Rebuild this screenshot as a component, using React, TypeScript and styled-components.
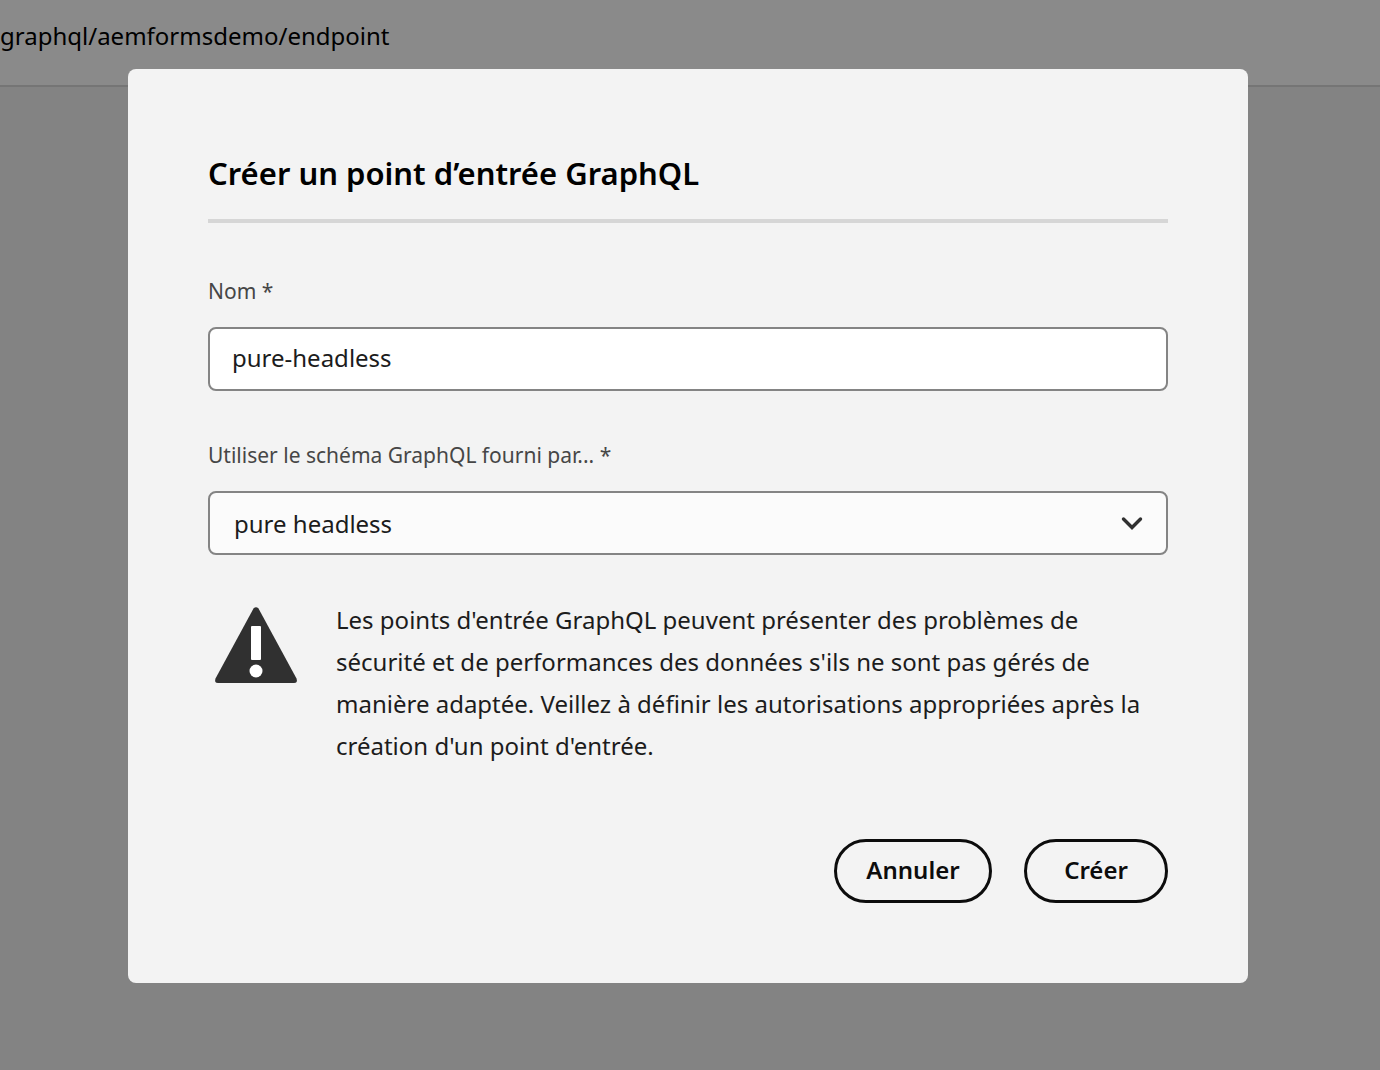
import React, { useState } from "react";
import styled, { createGlobalStyle } from "styled-components";

const GlobalStyle = createGlobalStyle`
  *, *::before, *::after { box-sizing: border-box; }
  body {
    margin: 0;
    background: #838383;
    color: #000;
    font-family: "Noto Sans", "Open Sans", sans-serif;
    font-size: 24px;
  }
`;

const Page = styled.div`
  min-height: 100vh;
`;

const TopBar = styled.header`
  height: 87px;
  padding: 16px 0;
  border-bottom: 2px solid #757575;
  background: #8a8a8a;
  line-height: 40px;
  white-space: nowrap;
`;

const Overlay = styled.div`
  position: fixed;
  inset: 0;
  display: flex;
  align-items: flex-start;
  justify-content: center;
  padding: 69px 132px 69px 128px;
  overflow: auto;
`;

const Dialog = styled.form`
  width: 100%;
  max-width: 1120px;
  padding: 80px;
  border-radius: 8px;
  background: #f3f3f3;
`;

const Title = styled.h1`
  margin: 0 0 52px;
  padding-bottom: 22px;
  border-bottom: 4px solid #d6d6d6;
  font-size: 31px;
  font-weight: 600;
  line-height: 48px;
`;

const Fields = styled.div`
  display: grid;
  gap: 48px;
`;

const Field = styled.div`
  display: grid;
  gap: 20px;
`;

const Label = styled.label`
  color: #464646;
  font-size: 21px;
  line-height: 32px;
`;

const TextInput = styled.input`
  width: 100%;
  height: 64px;
  padding: 0 22px 4px;
  border: 2px solid #848484;
  border-radius: 8px;
  background: #fff;
  color: #1c1c1c;
  font: inherit;
`;

const SelectBox = styled.div`
  display: grid;
  align-items: center;

  > * { grid-area: 1 / 1; }
`;

const Select = styled.select`
  appearance: none;
  width: 100%;
  height: 64px;
  padding: 0 72px 0 24px;
  border: 2px solid #848484;
  border-radius: 8px;
  background: #fbfbfb;
  color: #1c1c1c;
  font: inherit;
`;

const Chevron = styled.svg`
  justify-self: end;
  margin-right: 24px;
  pointer-events: none;
`;

const Notice = styled.div`
  display: flex;
  gap: 38px;
  margin: 44px 0 72px;
  padding-left: 6px;
`;

const WarningIcon = styled.svg`
  flex: none;
  margin-top: 7px;
`;

const NoticeText = styled.p`
  margin: 0;
  color: #1c1c1c;
  line-height: 42px;
`;

const Actions = styled.div`
  display: flex;
  justify-content: flex-end;
  gap: 32px;
`;

const Button = styled.button<{ $width: number }>`
  min-width: ${({ $width }) => $width}px;
  height: 64px;
  padding: 0 24px 4px;
  border: 3px solid #0c0c0c;
  border-radius: 32px;
  background: transparent;
  color: #0c0c0c;
  font: inherit;
  font-weight: 600;
`;

export default function App() {
  const [name, setName] = useState("pure-headless");

  return (
    <Page>
      <GlobalStyle />
      <TopBar>graphql/aemformsdemo/endpoint</TopBar>
      <Overlay>
        <Dialog role="dialog" aria-labelledby="title" onSubmit={(e) => e.preventDefault()}>
          <Title id="title">Créer un point d’entrée GraphQL</Title>
          <Fields>
            <Field>
              <Label htmlFor="name">Nom *</Label>
              <TextInput id="name" required value={name} onChange={(e) => setName(e.target.value)} />
            </Field>
            <Field>
              <Label htmlFor="schema">Utiliser le schéma GraphQL fourni par... *</Label>
              <SelectBox>
                <Select id="schema" required>
                  <option>pure headless</option>
                </Select>
                <Chevron width="24" height="16" viewBox="0 0 24 16" aria-hidden="true">
                  <path d="M3.500 4l8.500 8.500 8.500-8.500" fill="none" stroke="#303030" strokeWidth="3.400" strokeLinecap="round" />
                </Chevron>
              </SelectBox>
            </Field>
          </Fields>
          <Notice>
            <WarningIcon width="84" height="78" viewBox="0 0 84 78" aria-hidden="true">
              <path
                d="M39.5 2.5Q42 0 44.500 2.500L82.500 72.500Q84 77 80 77H4Q0 77 1.500 72.500Z"
                fill="#303030"
              />
              <rect x="37" y="20" width="10" height="34" rx="1" fill="#fff" />
              <circle cx="42" cy="65" r="6.500" fill="#fff" />
            </WarningIcon>
            <NoticeText>
              Les points d'entrée GraphQL peuvent présenter des problèmes de sécurité et de performances des données
              s'ils ne sont pas gérés de manière adaptée. Veillez à définir les autorisations appropriées après la
              création d'un point d'entrée.
            </NoticeText>
          </Notice>
          <Actions>
            <Button type="button" $width={158}>Annuler</Button>
            <Button type="submit" $width={144}>Créer</Button>
          </Actions>
        </Dialog>
      </Overlay>
    </Page>
  );
}
